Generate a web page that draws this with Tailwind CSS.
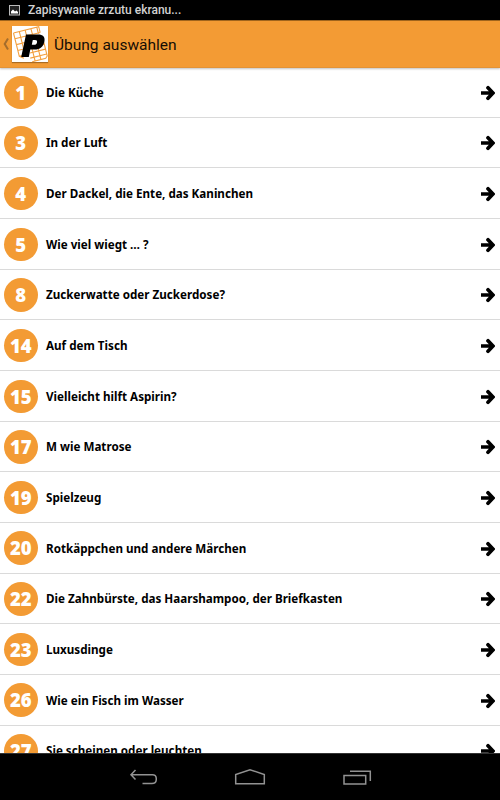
<!DOCTYPE html>
<html lang="de">
<head>
    <meta charset="UTF-8">
    <meta name="viewport" content="width=device-width, initial-scale=1.0">
    <title>Übung auswählen</title>
    <script src="https://cdn.jsdelivr.net/npm/@tailwindcss/browser@4"></script>
</head>
<body class="bg-black">
    <div class="w-[500px] h-[800px] flex flex-col overflow-hidden bg-white">
        <!-- Status bar -->
        <div class="h-[20px] shrink-0 bg-black flex items-center pl-[9px] gap-[8px]">
            <svg class="w-[11px] h-[11px]" viewBox="0 0 11 11">
                <rect x="0.5" y="0.5" width="10" height="9.5" fill="#222" stroke="#bbb" />
                <path d="M2 8.5V6.5L4 4.5L6 6.5L7.5 5.5L9 7V8.5Z" fill="#fff" />
            </svg>
            <span class="font-['Roboto',sans-serif] font-medium text-[12px] leading-[20px] text-[#d2d2d2]">Zapisywanie zrzutu ekranu...</span>
        </div>

        <!-- Action bar -->
        <header class="relative z-10 h-[48px] shrink-0 bg-[#f39b34] flex items-center border-t border-b border-t-[#a0641c] border-b-[#e39336] shadow-[0_1px_2px_rgba(0,0,0,0.25)]">
            <svg class="w-[6px] h-[14px] ml-[3px]" viewBox="0 0 6 14">
                <path d="M5 1.5L1.7 7L5 12.5" fill="none" stroke="#a56d2c" stroke-width="2" />
            </svg>
            <svg class="w-[36px] h-[36px] ml-[3px] shadow-[0_1px_1px_rgba(0,0,0,0.3)]" viewBox="0 0 36 36">
                <rect width="36" height="36" fill="#fff" />
                <g fill="none" stroke="#f3a040" stroke-width="1.1">
                    <path transform="translate(1.5 7) rotate(-14)" d="M0 0H26V6M0 0V24L4 27M0 6H26M0 12H12M0 18H9M0 24H8M6 0V24M12 0V10M18 0V7M24 0V7" />
                    <path transform="translate(18 27) rotate(-14)" d="M0 0H16M-1 5H16M0 9H14L16 7V-7M3 -4V9M9 -4V9M6 -5H16" />
                </g>
                <path fill="#000" fill-rule="evenodd" d="M14 8.5H26C31 8.5 33.3 11 32.4 15.5C31.3 21 28 23.5 22.5 23.5H18.3L16.8 31H9.2ZM20.8 14L19.8 18.7H22C23.8 18.7 24.7 18 25 16.4C25.3 14.8 24.7 14 23 14Z" />
            </svg>
            <h1 class="ml-[6px] mt-px font-['Roboto',sans-serif] text-[15.5px] leading-[20px] text-[#150d04]">Übung auswählen</h1>
        </header>

        <!-- Exercise list -->
        <ul id="exercises" class="flex-1 min-h-0 overflow-hidden -mt-px"></ul>

        <!-- Navigation bar -->
        <nav class="h-[47px] shrink-0 bg-black border-t border-[#333] flex items-center pl-[129px]">
            <svg class="w-[28px] h-[18px]" viewBox="0 0 28 18" fill="none" stroke="#929292" stroke-width="1.5">
                <path d="M6.5 2L2 6.8L6.5 11.5M2 6.8H23.5Q27.3 6.8 27.3 11Q27.3 15.6 23 15.6H13.5" />
            </svg>
            <svg class="w-[32px] h-[18px] ml-[77px]" viewBox="0 0 32 18" fill="none" stroke="#929292" stroke-width="1.5">
                <path d="M1.7 15.8V6.5L16 1.7L30.3 6.5V15.8Z" />
            </svg>
            <svg class="w-[30px] h-[18px] ml-[76px]" viewBox="0 0 30 18" fill="none" stroke="#929292" stroke-width="1.5">
                <path d="M2 7.5H23.7V16H2ZM8 3.3H28.3V13" />
            </svg>
        </nav>
    </div>

    <script>
        const exercises = [
            [1, 'Die Küche'],
            [3, 'In der Luft'],
            [4, 'Der Dackel, die Ente, das Kaninchen'],
            [5, 'Wie viel wiegt … ?'],
            [8, 'Zuckerwatte oder Zuckerdose?'],
            [14, 'Auf dem Tisch'],
            [15, 'Vielleicht hilft Aspirin?'],
            [17, 'M wie Matrose'],
            [19, 'Spielzeug'],
            [20, 'Rotkäppchen und andere Märchen'],
            [22, 'Die Zahnbürste, das Haarshampoo, der Briefkasten'],
            [23, 'Luxusdinge'],
            [26, 'Wie ein Fisch im Wasser'],
            [27, 'Sie scheinen oder leuchten']
        ];

        document.getElementById('exercises').innerHTML = exercises.map(([number, title]) => `
            <li class="h-[50.67px] flex items-center border-b border-[#dadada] pt-[1px] pl-[4px] pr-[5px] font-['Noto_Sans',sans-serif]">
                <span class="w-[33.5px] h-[33.5px] shrink-0 rounded-full bg-[#f39b34] text-white text-[18.5px] leading-[34px] font-black text-center">${number}</span>
                <span class="ml-[8.5px] mt-[1px] flex-1 whitespace-nowrap text-[11.65px] leading-[18px] font-bold text-black">${title}</span>
                <svg class="w-[14px] h-[16px] mt-[1px]" viewBox="0 0 14 16">
                    <path d="M1 8H11M7 2.8L12 8L7 13.2" fill="none" stroke="#000" stroke-width="3.7" stroke-linecap="round" />
                </svg>
            </li>
        `).join('');
    </script>
</body>
</html>
